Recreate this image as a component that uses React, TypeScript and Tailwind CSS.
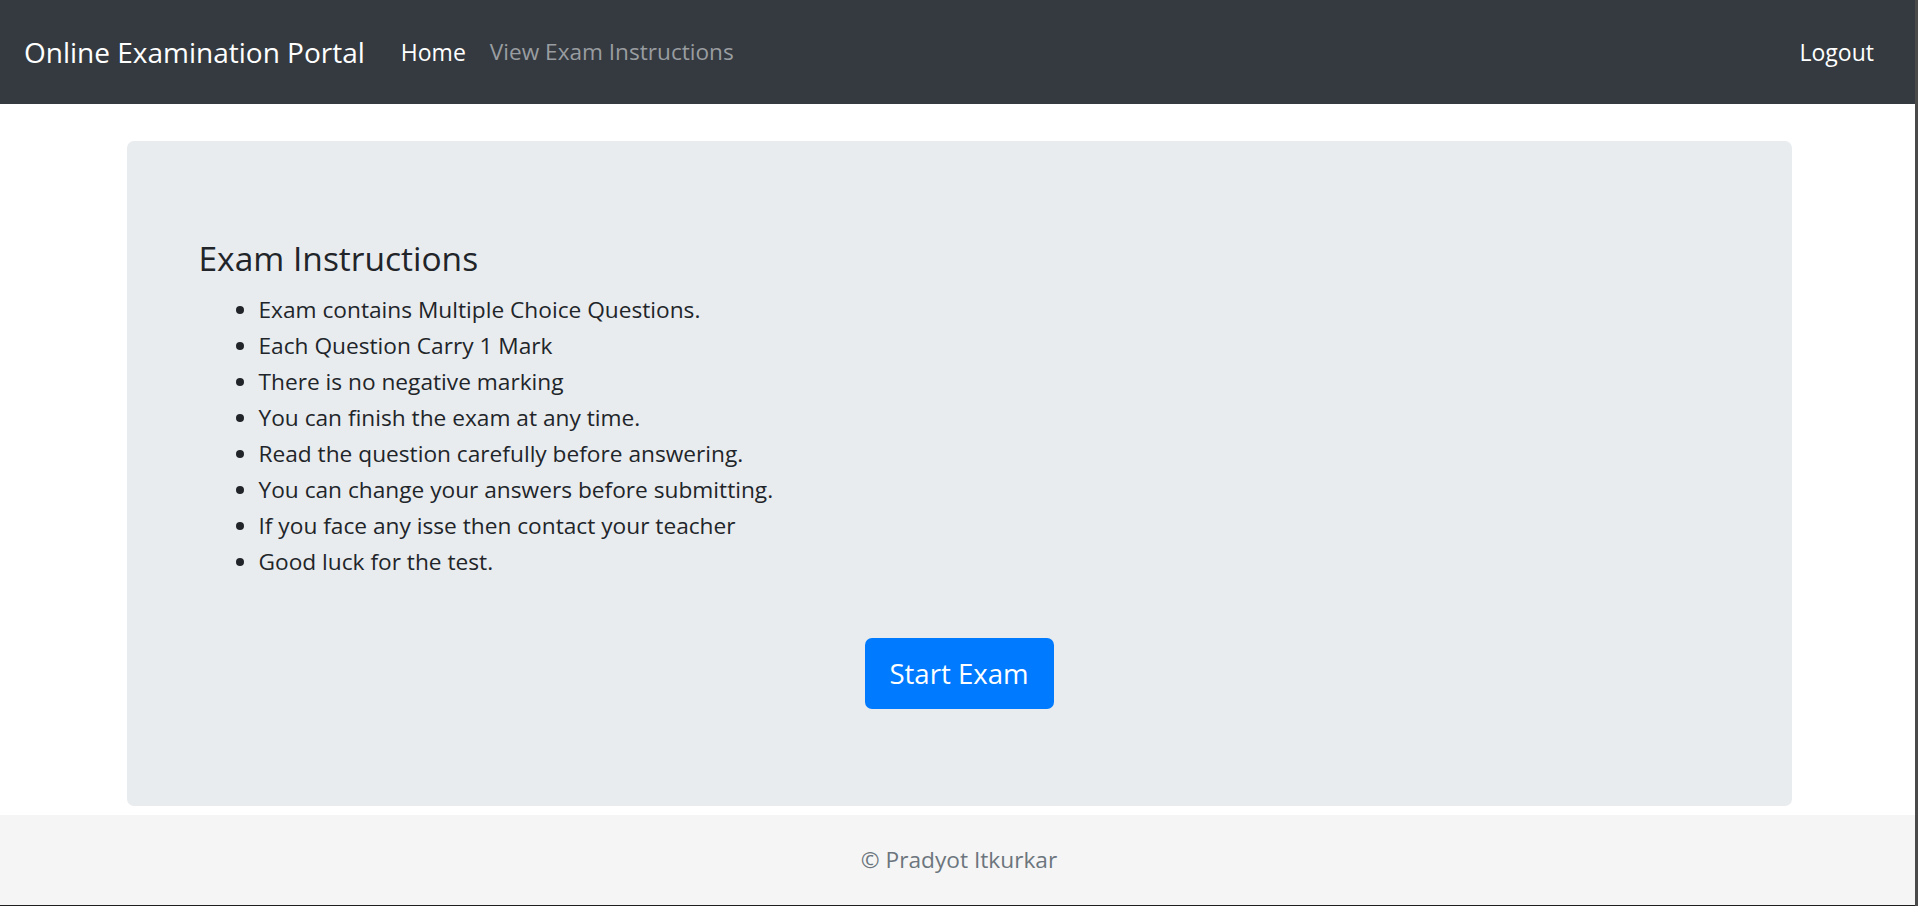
const instructions = [
  "Exam contains Multiple Choice Questions.",
  "Each Question Carry 1 Mark",
  "There is no negative marking",
  "You can finish the exam at any time.",
  "Read the question carefully before answering.",
  "You can change your answers before submitting.",
  "If you face any isse then contact your teacher",
  "Good luck for the test.",
];

function Navbar() {
  return (
    <nav className="flex h-[104px] items-center bg-[#343a40] pl-[24px] pr-[44px]">
      <a href="#" className="mr-[24px] text-[28px] leading-[45px] text-white">
        Online Examination Portal
      </a>
      <ul className="flex items-center">
        <li>
          <a href="#" className="px-[12px] text-[23px] leading-[36px] text-white">
            Home
          </a>
        </li>
        <li>
          <a href="#" className="px-[12px] text-[22.6px] leading-[36px] text-[#9a9da0]">
            View Exam Instructions
          </a>
        </li>
      </ul>
      <a href="#" className="ml-auto text-[23px] leading-[36px] text-white">
        Logout
      </a>
    </nav>
  );
}

export default function App() {
  return (
    <div
      className="relative flex h-[906px] w-full flex-col bg-white text-[#212529]"
      style={{ fontFamily: '"Open Sans", "Noto Sans", sans-serif' }}
    >
      <Navbar />
      <main className="flex-1 pt-[37px]">
        <div className="mx-auto w-[1665px] rounded-[7px] bg-[#e9ecef] px-[72px] pt-[96px] pb-[97px]">
          <h4 className="mb-[12px] text-[33.5px] leading-[43px]">Exam Instructions</h4>
          <ul className="list-disc pl-[60px] text-[22.7px] leading-[36px]">
            {instructions.map((item) => (
              <li key={item}>{item}</li>
            ))}
          </ul>
          <div className="mt-[58px] flex justify-center">
            <button className="h-[71px] w-[189px] rounded-[7px] bg-[#007bff] text-[27.6px] text-white">
              Start Exam
            </button>
          </div>
        </div>
      </main>
      <footer className="flex h-[91px] items-center justify-center border-b border-[#1e1e1e] bg-[#f5f5f5] text-[22.7px] text-[#6c757d]">
        © Pradyot Itkurkar
      </footer>
      <div className="absolute top-0 right-0 h-full w-[3px] bg-[#4a4a4a]" />
    </div>
  );
}
